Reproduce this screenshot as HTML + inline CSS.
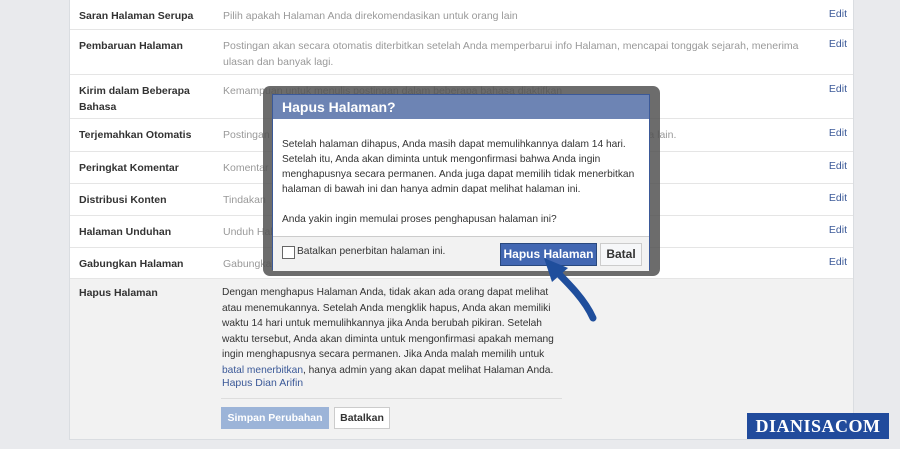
<!DOCTYPE html><html><head><style>
body{margin:0;width:900px;height:449px;background:#e9eaed;font-family:"Liberation Sans",sans-serif;position:relative;overflow:hidden;font-size:10.5px}
.panel{position:absolute;left:69px;top:-1px;width:783px;height:439px;background:#fff;border:1px solid #dadde1}
.row{position:absolute;left:0;width:783px;border-bottom:1px solid #e5e5e5}
.lab{position:absolute;left:9px;font-weight:bold;color:#333;line-height:16px;width:130px}
.desc{position:absolute;left:153px;color:#999;line-height:16px;width:590px}
.edit{position:absolute;right:6px;color:#3b5998}
.t{position:absolute}
.nw{white-space:nowrap;font-size:10.2px}
</style></head><body>
<div class="panel">
<div class="row" style="top:0;height:29px"><div class="lab" style="top:8px">Saran Halaman Serupa</div><div class="desc" style="top:8px">Pilih apakah Halaman Anda direkomendasikan untuk orang lain</div><div class="edit" style="top:8px">Edit</div></div>
<div class="row" style="top:30px;height:44px"><div class="lab" style="top:8px">Pembaruan Halaman</div><div class="desc" style="top:8px">Postingan akan secara otomatis diterbitkan setelah Anda memperbarui info Halaman, mencapai tonggak sejarah, menerima<br>ulasan dan banyak lagi.</div><div class="edit" style="top:8px">Edit</div></div>
<div class="row" style="top:75px;height:43px"><div class="lab" style="top:8px">Kirim dalam Beberapa Bahasa</div><div class="desc" style="top:8px">Kemampuan untuk menulis postingan dalam beberapa bahasa diaktifkan</div><div class="edit" style="top:8px">Edit</div></div>
<div class="row" style="top:119px;height:32px"><div class="lab" style="top:8px">Terjemahkan Otomatis</div><div class="desc" style="top:8px">Postingan ...................................................................................................................... bahasa lain.</div><div class="edit" style="top:8px">Edit</div></div>
<div class="row" style="top:152px;height:31px"><div class="lab" style="top:8px">Peringkat Komentar</div><div class="desc" style="top:8px">Komentar</div><div class="edit" style="top:8px">Edit</div></div>
<div class="row" style="top:184px;height:31px"><div class="lab" style="top:8px">Distribusi Konten</div><div class="desc" style="top:8px">Tindakan</div><div class="edit" style="top:8px">Edit</div></div>
<div class="row" style="top:216px;height:31px"><div class="lab" style="top:8px">Halaman Unduhan</div><div class="desc" style="top:8px">Unduh Halaman</div><div class="edit" style="top:8px">Edit</div></div>
<div class="row" style="top:248px;height:30px"><div class="lab" style="top:8px">Gabungkan Halaman</div><div class="desc" style="top:8px">Gabungkan</div><div class="edit" style="top:8px">Edit</div></div>
<div style="position:absolute;top:279px;left:0;width:783px;height:160px;background:#f2f2f2">
<div class="lab" style="top:6px">Hapus Halaman</div>
<div class="t nw" style="left:152px;top:6px;color:#333;line-height:15.5px">Dengan menghapus Halaman Anda, tidak akan ada orang dapat melihat<br>atau menemukannya. Setelah Anda mengklik hapus, Anda akan memiliki<br>waktu 14 hari untuk memulihkannya jika Anda berubah pikiran. Setelah<br>waktu tersebut, Anda akan diminta untuk mengonfirmasi apakah memang<br>ingin menghapusnya secara permanen. Jika Anda malah memilih untuk<br><span style="color:#3b5998">batal menerbitkan</span>, hanya admin yang akan dapat melihat Halaman Anda.</div>
<div class="t" style="left:152px;top:98px;color:#3b5998">Hapus Dian Arifin</div>
<div class="t" style="left:151px;top:119px;width:341px;border-top:1px solid #ddd"></div>
<div class="t" style="left:151px;top:128px;width:108px;height:22px;background:#9cb4d8;color:#fff;font-weight:bold;line-height:22px;text-align:center">Simpan Perubahan</div>
<div class="t" style="left:264px;top:128px;width:54px;height:20px;background:#fff;border:1px solid #ccc;color:#333;font-weight:bold;line-height:20px;text-align:center">Batalkan</div>
</div>
</div>
<div class="t" style="left:263px;top:86px;width:397px;height:190px;background:rgba(82,82,82,.85);border-radius:7px"></div>
<div class="t" style="left:272px;top:94px;width:378px;height:176px;background:#fff;border:1px solid #3b5998;box-sizing:border-box">
<div style="height:24px;background:#6d84b4;color:#fff;font-weight:bold;font-size:14px;line-height:24px;padding-left:9px">Hapus Halaman?</div>
<div class="t nw" style="left:9px;top:42px;color:#333;line-height:15px">Setelah halaman dihapus, Anda masih dapat memulihkannya dalam 14 hari.<br>Setelah itu, Anda akan diminta untuk mengonfirmasi bahwa Anda ingin<br>menghapusnya secara permanen. Anda juga dapat memilih tidak menerbitkan<br>halaman di bawah ini dan hanya admin dapat melihat halaman ini.<br><br>Anda yakin ingin memulai proses penghapusan halaman ini?</div>
<div class="t" style="left:0;top:141px;width:376px;height:34px;background:#f2f2f2;border-top:1px solid #ccc"></div>
<div class="t" style="left:9px;top:151px;width:11px;height:11px;border:1px solid #666;background:#fff"></div>
<div class="t nw" style="left:24px;top:151px;color:#333">Batalkan penerbitan halaman ini.</div>
<div class="t" style="left:227px;top:148px;width:95px;height:21px;background:#4267b2;border:1px solid #29487d;color:#fff;font-weight:bold;font-size:12px;line-height:21px;text-align:center">Hapus Halaman</div>
<div class="t" style="left:327px;top:148px;width:40px;height:21px;background:#f6f7f9;border:1px solid #ccc;color:#333;font-weight:bold;font-size:12px;line-height:21px;text-align:center">Batal</div>
</div>
<svg class="t" style="left:0;top:0" width="900" height="449"><path d="M593 318 C585 300 570 285 552 267" stroke="#1f4e9c" stroke-width="7" fill="none" stroke-linecap="round"/><path d="M544 258 L568 268 L552 282 Z" fill="#1f4e9c"/></svg>
<div class="t" style="left:747px;top:413px;width:142px;height:26px;background:#214b9c;color:#fff;font-family:'Liberation Serif',serif;font-weight:bold;font-size:18px;line-height:27px;text-align:center;letter-spacing:0.5px">DIANISACOM</div>
</body></html>
